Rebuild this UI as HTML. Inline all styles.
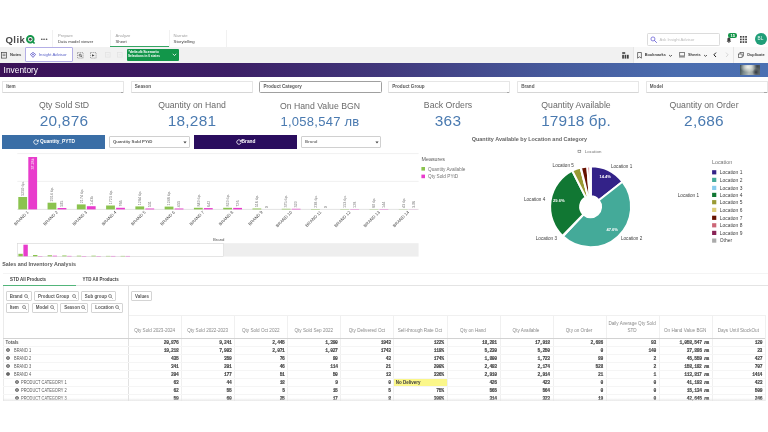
<!DOCTYPE html>
<html lang="en"><head><meta charset="utf-8"><title>Inventory - Qlik Sense</title>
<style>
html,body{margin:0;padding:0;background:#fff;}
body{width:768px;height:432px;overflow:hidden;position:relative;font-family:"Liberation Sans",sans-serif;color:#404040;}
.a{position:absolute;white-space:nowrap;line-height:1;}
.t{position:absolute;white-space:nowrap;line-height:1;transform-origin:0 50%;}
.vsep{position:absolute;width:1px;background:#f1f1f1;}
.hsep{position:absolute;height:1px;background:#e6e6e6;}
.fbox{position:absolute;top:80.6px;height:12.6px;border:0.6px solid #e6e6e6;border-bottom-color:#d6d6d6;border-radius:1px;background:#fff;box-sizing:border-box;}
.fbox span{position:absolute;left:3.2px;top:3.5px;font-size:4.6px;font-weight:bold;color:#595959;line-height:1;}
.kt{position:absolute;width:128px;text-align:center;font-size:8.7px;color:#6a6a6a;line-height:1;white-space:nowrap;}
.kv{position:absolute;width:128px;text-align:center;font-size:15.4px;color:#4a7ab0;line-height:1;white-space:nowrap;letter-spacing:0.25px;}
.chip{position:absolute;height:9.6px;border:0.8px solid #d4d4d4;border-radius:1px;box-sizing:border-box;background:#fff;font-size:4.45px;font-weight:bold;color:#595959;line-height:1;white-space:nowrap;}
.chip span{position:absolute;left:3.2px;top:2.3px;}
.th{position:absolute;width:53px;text-align:center;font-size:4.62px;color:#8a8a8a;line-height:1.5;white-space:nowrap;}
.td{position:absolute;width:50.3px;text-align:right;font-size:4.7px;font-weight:bold;color:#454545;line-height:1;white-space:nowrap;font-family:"Liberation Mono","Liberation Sans",monospace;letter-spacing:-0.35px;-webkit-text-stroke:0.14px #454545;}
.rl{position:absolute;font-size:4.6px;transform:scaleX(0.86);transform-origin:0 50%;color:#595959;line-height:1;white-space:nowrap;}
.lg{position:absolute;font-size:5px;color:#595959;line-height:1;white-space:nowrap;}
</style></head><body>
<div id="app" style="position:absolute;left:0;top:0;width:768px;height:432px;overflow:hidden;will-change:transform;">

<!-- top navigation -->
<div class="a" style="left:5.4px;top:34.9px;font-size:9.6px;font-weight:bold;color:#4a4a4a;letter-spacing:0.45px;">Qlik</div>
<svg class="a" style="left:25px;top:33.6px;" width="12" height="12" viewBox="0 0 12 12">
 <circle cx="5.3" cy="5.3" r="3.3" fill="#fff" stroke="#14964a" stroke-width="1.9"/>
 <circle cx="5.3" cy="5.3" r="1.35" fill="#4a4a4a"/>
 <path d="M7.9 7.9 L9.6 9.5" stroke="#14964a" stroke-width="1.7" stroke-linecap="butt"/>
</svg>
<div class="a" style="left:40.8px;top:35.9px;font-size:6px;font-weight:bold;color:#595959;letter-spacing:0.2px;">&#8226;&#8226;&#8226;</div>
<div class="vsep" style="left:52px;top:30px;height:17px;"></div>
<div class="a" style="left:58px;top:34.4px;font-size:4.2px;color:#a0a0a0;">Prepare</div>
<div class="a" style="left:58px;top:40.2px;font-size:4.25px;color:#404040;">Data model viewer</div>
<div class="vsep" style="left:110px;top:30px;height:17px;"></div>
<div class="a" style="left:115.5px;top:34.4px;font-size:4.2px;color:#a0a0a0;">Analyze</div>
<div class="a" style="left:115.5px;top:40.2px;font-size:4.25px;color:#404040;">Sheet</div>
<div class="a" style="left:110px;top:46.3px;width:59px;height:1px;background:#35a663;"></div>
<div class="vsep" style="left:168.6px;top:30px;height:17px;"></div>
<div class="a" style="left:173.6px;top:34.4px;font-size:4.2px;color:#a0a0a0;">Narrate</div>
<div class="a" style="left:173.6px;top:40.2px;font-size:4.25px;color:#404040;">Storytelling</div>
<div class="vsep" style="left:226.4px;top:30px;height:17px;"></div>

<!-- search -->
<div class="a" style="left:647.4px;top:33.3px;width:72.6px;height:12.3px;border:0.6px solid #dcdcdc;border-radius:1.2px;box-sizing:border-box;background:#fff;"></div>
<svg class="a" style="left:649.6px;top:36px;" width="7.4" height="7.4" viewBox="0 0 7 7"><circle cx="2.8" cy="2.8" r="1.9" fill="none" stroke="#6a62d6" stroke-width="0.75"/><path d="M4.2 4.2 L6.2 6.2" stroke="#6a62d6" stroke-width="0.85" stroke-linecap="round"/></svg>
<div class="a" style="left:659.4px;top:37.6px;font-size:4.15px;color:#bcbcbc;">Ask Insight Advisor</div>
<!-- bell -->
<svg class="a" style="left:725.8px;top:36.6px;" width="5.8" height="6.5" viewBox="0 0 8 9"><path d="M4 0.8 C2.4 0.8 1.9 2.2 1.9 3.4 L1.9 5.2 L0.9 6.5 L7.1 6.5 L6.1 5.2 L6.1 3.4 C6.1 2.2 5.6 0.8 4 0.8 Z" fill="#404040"/><circle cx="4" cy="7.4" r="0.9" fill="#404040"/></svg>
<div class="a" style="left:728.4px;top:32.9px;width:8.8px;height:4.9px;border-radius:2.2px;background:#14964a;"></div>
<div class="a" style="left:730.4px;top:33.7px;font-size:4.1px;font-weight:bold;color:#fff;">15</div>
<svg class="a" style="left:739.6px;top:35.8px;" width="7" height="7" viewBox="0 0 7 7" fill="#404040"><rect x="0" y="0" width="1.7" height="1.7"/><rect x="2.6" y="0" width="1.7" height="1.7"/><rect x="5.2" y="0" width="1.7" height="1.7"/><rect x="0" y="2.6" width="1.7" height="1.7"/><rect x="2.6" y="2.6" width="1.7" height="1.7"/><rect x="5.2" y="2.6" width="1.7" height="1.7"/><rect x="0" y="5.2" width="1.7" height="1.7"/><rect x="2.6" y="5.2" width="1.7" height="1.7"/><rect x="5.2" y="5.2" width="1.7" height="1.7"/></svg>
<div class="a" style="left:754.6px;top:33.4px;width:12px;height:12px;border-radius:6px;background:#1f9e78;"></div>
<div class="a" style="left:757.6px;top:37.1px;font-size:4.7px;color:#e8f5f0;">BL</div>

<!-- toolbar -->
<div class="a" style="left:0;top:47px;width:768px;height:15.6px;background:#f1f1f1;"></div>
<div class="a" style="left:633px;top:47px;width:135px;height:15.6px;background:#f8f8f8;"></div>
<svg class="a" style="left:1.1px;top:51.8px;" width="6" height="7" viewBox="0 0 6 7"><rect x="0.5" y="0.5" width="5" height="5.6" fill="none" stroke="#404040" stroke-width="0.7"/><path d="M1.5 2.2 H4.5 M1.5 3.6 H4.5" stroke="#404040" stroke-width="0.6"/></svg>
<div class="a" style="left:10px;top:53.2px;font-size:4.1px;font-weight:bold;color:#404040;">Notes</div>
<div class="a" style="left:25.4px;top:47px;width:47.2px;height:15.4px;background:#fff;border:0.7px solid #b3aee6;box-sizing:border-box;border-radius:1px;"></div>
<svg class="a" style="left:29.6px;top:51.6px;" width="6" height="6" viewBox="0 0 6 6"><path d="M3 0.4 L5.6 2.4 L3 5.4 L0.4 2.4 Z" fill="none" stroke="#5a55c8" stroke-width="0.8"/><circle cx="3" cy="2.6" r="0.8" fill="#5a55c8"/></svg>
<div class="a" style="left:38.8px;top:52.8px;font-size:4.3px;color:#5a62c8;">Insight Advisor</div>
<svg class="a" style="left:77px;top:51.6px;" width="7" height="7" viewBox="0 0 7 7"><rect x="0.5" y="0.5" width="5.6" height="5.6" fill="none" stroke="#6e6e6e" stroke-width="0.6" stroke-dasharray="1.2 0.9"/><circle cx="3.2" cy="3.2" r="1.1" fill="none" stroke="#404040" stroke-width="0.7"/><path d="M4 4 L5.2 5.2" stroke="#404040" stroke-width="0.7"/></svg>
<svg class="a" style="left:89.6px;top:51.6px;" width="7" height="7" viewBox="0 0 7 7"><rect x="0.5" y="0.5" width="5.6" height="5.6" fill="none" stroke="#6e6e6e" stroke-width="0.6" stroke-dasharray="1.2 0.9"/><path d="M2 2.2 L4.6 3.4 L2 4.6 Z" fill="#404040"/></svg>
<svg class="a" style="left:104.6px;top:52px;" width="6" height="6" viewBox="0 0 6 6"><rect x="0.5" y="0.5" width="4.6" height="4.6" fill="none" stroke="#e2e2e2" stroke-width="0.7"/><path d="M1.6 2.8 H4" stroke="#e2e2e2" stroke-width="0.7"/></svg>
<svg class="a" style="left:117.4px;top:52px;" width="6" height="6" viewBox="0 0 6 6"><rect x="0.5" y="0.5" width="4.6" height="4.6" fill="none" stroke="#e2e2e2" stroke-width="0.7"/><path d="M1.6 2.8 H4" stroke="#e2e2e2" stroke-width="0.7"/></svg>
<div class="a" style="left:126.8px;top:49px;width:52.4px;height:11.8px;background:#12964a;border-radius:1px;"></div>
<div class="a" style="left:128.4px;top:50.6px;font-size:3.7px;font-weight:bold;color:#fff;">*default:Scenario</div>
<div class="a" style="left:128.4px;top:55px;font-size:3.7px;font-weight:bold;color:#fff;transform:scaleX(0.85);transform-origin:0 50%;">Selections in 0 states</div>
<svg class="a" style="left:172px;top:53.4px;" width="5" height="4" viewBox="0 0 5 4"><path d="M0.8 0.8 L2.5 2.6 L4.2 0.8" fill="none" stroke="#fff" stroke-width="0.8"/></svg>

<svg class="a" style="left:621.8px;top:51.6px;" width="7" height="7" viewBox="0 0 7 7" fill="#404040"><rect x="0.2" y="0.2" width="3" height="1.6"/><rect x="0.2" y="2.8" width="1.7" height="3.8"/><rect x="2.6" y="2.8" width="1.7" height="3.8"/><rect x="5" y="2.8" width="1.7" height="3.8"/></svg>
<div class="vsep" style="left:633px;top:47px;height:15.6px;background:#e6e6e6;"></div>
<svg class="a" style="left:636.6px;top:51.6px;" width="5" height="7" viewBox="0 0 5 7"><path d="M0.6 0.5 H4.4 V6.2 L2.5 4.8 L0.6 6.2 Z" fill="none" stroke="#404040" stroke-width="0.7"/></svg>
<div class="a" style="left:644.7px;top:53.3px;font-size:3.9px;font-weight:bold;color:#404040;">Bookmarks</div>
<svg class="a" style="left:668.1px;top:54px;" width="5" height="4" viewBox="0 0 5 4"><path d="M1.1 1 L2.5 2.4 L3.9 1" fill="none" stroke="#404040" stroke-width="0.9"/></svg>
<svg class="a" style="left:679px;top:52px;" width="6.4" height="5.5" viewBox="0 0 7 6"><rect x="0.8" y="0.5" width="5.4" height="3.8" fill="none" stroke="#404040" stroke-width="0.7"/><path d="M0 5.4 H7" stroke="#404040" stroke-width="0.8"/></svg>
<div class="a" style="left:688px;top:53.3px;font-size:3.9px;font-weight:bold;color:#404040;">Sheets</div>
<svg class="a" style="left:703.2px;top:54px;" width="5" height="4" viewBox="0 0 5 4"><path d="M1.1 1 L2.5 2.4 L3.9 1" fill="none" stroke="#404040" stroke-width="0.9"/></svg>
<svg class="a" style="left:712.6px;top:52.4px;" width="4" height="6" viewBox="0 0 4 6"><path d="M3 0.6 L0.9 2.8 L3 5" fill="none" stroke="#202020" stroke-width="1"/></svg>
<svg class="a" style="left:724.6px;top:52.4px;" width="4" height="6" viewBox="0 0 4 6"><path d="M1 0.6 L3.1 2.8 L1 5" fill="none" stroke="#d4d4d4" stroke-width="0.9"/></svg>
<div class="vsep" style="left:733.4px;top:47px;height:15.6px;background:#e6e6e6;"></div>
<svg class="a" style="left:738px;top:51.9px;" width="6.4" height="6.4" viewBox="0 0 7 7"><rect x="2.2" y="0.5" width="4" height="4" fill="none" stroke="#404040" stroke-width="0.7"/><rect x="0.5" y="2.2" width="4" height="4" fill="#f8f8f8" stroke="#404040" stroke-width="0.7"/></svg>
<div class="a" style="left:747.2px;top:53.3px;font-size:3.9px;font-weight:bold;color:#404040;">Duplicate</div>

<!-- sheet header -->
<div class="a" style="left:0;top:62.6px;width:768px;height:14.6px;background:linear-gradient(90deg,#3a1157 0%,#3c1f66 30%,#41387c 50%,#465a9c 72%,#4a6cae 88%,#4b70b2 100%);"></div>
<div class="a" style="left:3.6px;top:65.6px;font-size:8.4px;color:#fff;">Inventory</div>
<div class="a" style="left:740px;top:64.8px;width:20px;height:10.6px;background:radial-gradient(ellipse at 40% 20%,#f2f3ec 0%,rgba(242,243,236,0) 48%),radial-gradient(circle at 80% 72%,#2e343a 0%,rgba(46,52,58,0) 22%),radial-gradient(circle at 88% 12%,#3a4248 0%,rgba(58,66,72,0) 30%),linear-gradient(100deg,#36464b 0%,#7a898b 22%,#b4bcb7 48%,#9aa3a2 68%,#596469 100%);"></div>

<!-- filter panes -->
<div class="fbox" style="left:2px;width:122.4px;"><span>Item</span></div>
<div class="a" style="left:120.80000000000001px;top:92.2px;width:2.6px;height:1px;background:#a6a6a6;"></div>
<div class="fbox" style="left:130.6px;width:122.4px;"><span>Season</span></div>
<div class="fbox" style="left:259.2px;width:122.4px;border:0.8px solid #a0a0a0;border-radius:1.5px;"><span>Product Category</span></div>
<div class="fbox" style="left:388px;width:122.4px;"><span>Product Group</span></div>
<div class="a" style="left:506.79999999999995px;top:92.2px;width:2.6px;height:1px;background:#a6a6a6;"></div>
<div class="fbox" style="left:517px;width:122.4px;"><span>Brand</span></div>
<div class="fbox" style="left:645.6px;width:122.4px;"><span>Model</span></div>
<div class="a" style="left:764.4px;top:92.2px;width:2.6px;height:1px;background:#a6a6a6;"></div>

<!-- KPIs -->
<div class="kt" style="left:0px;top:100.6px;">Qty Sold StD</div><div class="kv" style="left:0px;top:113.4px;">20,876</div>
<div class="kt" style="left:128px;top:100.6px;">Quantity on Hand</div><div class="kv" style="left:128px;top:113.4px;">18,281</div>
<div class="kt" style="left:256px;top:102.0px;">On Hand Value BGN</div><div class="kv" style="left:256px;top:113.4px;font-size:13px;top:114.7px;">1,058,547 лв</div>
<div class="kt" style="left:384px;top:100.6px;">Back Orders</div><div class="kv" style="left:384px;top:113.4px;">363</div>
<div class="kt" style="left:512px;top:100.6px;">Quantity Available</div><div class="kv" style="left:512px;top:113.4px;letter-spacing:0.1px;">17918 бр.</div>
<div class="kt" style="left:640px;top:100.6px;">Quantity on Order</div><div class="kv" style="left:640px;top:113.4px;">2,686</div>

<!-- variable buttons -->
<div class="a" style="left:2px;top:134.8px;width:103px;height:14.2px;background:#3a6ea6;"></div>
<svg class="a" style="left:33px;top:139.2px;" width="6" height="6" viewBox="0 0 6 6"><path d="M4.9 2 A2.2 2.2 0 1 0 5.1 3.6" fill="none" stroke="#fff" stroke-width="0.85"/><path d="M5.4 0.8 V2.4 H3.8" fill="none" stroke="#fff" stroke-width="0.8"/></svg>
<div class="a" style="left:40px;top:140px;font-size:4.8px;font-weight:bold;color:#fff;">Quantity_PYTD</div>
<div class="a" style="left:109.2px;top:136.2px;width:81.2px;height:11.4px;border:0.6px solid #d0d0d0;box-sizing:border-box;background:#fff;border-radius:1px;"></div>
<div class="a" style="left:113px;top:139.8px;font-size:4.3px;font-weight:bold;color:#595959;">Quantity Sold PYtD</div>
<svg class="a" style="left:183.2px;top:140.6px;" width="4" height="3" viewBox="0 0 4 3"><path d="M0.4 0.4 H3.6 L2 2.6 Z" fill="#404040"/></svg>
<div class="a" style="left:194.2px;top:134.8px;width:103px;height:14.2px;background:#2a0d5e;"></div>
<svg class="a" style="left:236px;top:139.2px;" width="6" height="6" viewBox="0 0 6 6"><path d="M4.9 2 A2.2 2.2 0 1 0 5.1 3.6" fill="none" stroke="#fff" stroke-width="0.85"/><path d="M5.4 0.8 V2.4 H3.8" fill="none" stroke="#fff" stroke-width="0.8"/></svg>
<div class="a" style="left:241.6px;top:140px;font-size:4.8px;font-weight:bold;color:#fff;">Brand</div>
<div class="a" style="left:301.2px;top:136.2px;width:80px;height:11.4px;border:0.6px solid #d0d0d0;box-sizing:border-box;background:#fff;border-radius:1px;"></div>
<div class="a" style="left:305px;top:139.8px;font-size:4.3px;font-weight:bold;color:#7a7a7a;">Brand</div>
<svg class="a" style="left:374.8px;top:140.6px;" width="4" height="3" viewBox="0 0 4 3"><path d="M0.4 0.4 H3.6 L2 2.6 Z" fill="#404040"/></svg>

<!-- bar chart -->
<svg class="a" style="left:0;top:150px;" width="470" height="112" viewBox="0 150 470 112" font-family="Liberation Sans, sans-serif">
<line x1="17.3" y1="153.6" x2="418.6" y2="153.6" stroke="#e6e6e6" stroke-width="0.6"/>
<line x1="17.3" y1="181.4" x2="418.6" y2="181.4" stroke="#e6e6e6" stroke-width="0.6"/>
<line x1="17.3" y1="209.4" x2="418.6" y2="209.4" stroke="#cfcfcf" stroke-width="0.6"/>
<rect x="18.30" y="197.00" width="8.8" height="12.40" fill="#8bc34f"/>
<rect x="28.30" y="157.00" width="8.8" height="52.40" fill="#e83ccc"/>
<text transform="translate(24.00,195.80) rotate(-90)" font-size="3.7" fill="#737373">5250 бр.</text>
<text transform="translate(34.00,169.60) rotate(-90)" font-size="3.7" fill="#ffffff">37.28k</text>
<text transform="translate(28.90,212.60) rotate(-45)" text-anchor="end" font-size="4.3" fill="#4d4d4d">BRAND 1</text>
<rect x="47.57" y="202.70" width="8.8" height="6.70" fill="#8bc34f"/>
<rect x="57.57" y="208.00" width="8.8" height="1.40" fill="#e83ccc"/>
<text transform="translate(53.27,201.50) rotate(-90)" font-size="3.7" fill="#737373">2914 бр.</text>
<text transform="translate(63.27,206.80) rotate(-90)" font-size="3.7" fill="#737373">595</text>
<text transform="translate(58.17,212.60) rotate(-45)" text-anchor="end" font-size="4.3" fill="#4d4d4d">BRAND 2</text>
<rect x="76.84" y="204.40" width="8.8" height="5.00" fill="#8bc34f"/>
<rect x="86.84" y="206.20" width="8.8" height="3.20" fill="#e83ccc"/>
<text transform="translate(82.54,203.20) rotate(-90)" font-size="3.7" fill="#737373">2174 бр.</text>
<text transform="translate(92.54,205.00) rotate(-90)" font-size="3.7" fill="#737373">1.43k</text>
<text transform="translate(87.44,212.60) rotate(-45)" text-anchor="end" font-size="4.3" fill="#4d4d4d">BRAND 3</text>
<rect x="106.11" y="205.50" width="8.8" height="3.90" fill="#8bc34f"/>
<rect x="116.11" y="207.80" width="8.8" height="1.60" fill="#e83ccc"/>
<text transform="translate(111.81,204.30) rotate(-90)" font-size="3.7" fill="#737373">1723 бр.</text>
<text transform="translate(121.81,206.60) rotate(-90)" font-size="3.7" fill="#737373">766</text>
<text transform="translate(116.71,212.60) rotate(-45)" text-anchor="end" font-size="4.3" fill="#4d4d4d">BRAND 4</text>
<rect x="135.38" y="206.40" width="8.8" height="3.00" fill="#8bc34f"/>
<rect x="145.38" y="208.50" width="8.8" height="0.90" fill="#e83ccc"/>
<text transform="translate(141.08,205.20) rotate(-90)" font-size="3.7" fill="#737373">1284 бр.</text>
<text transform="translate(151.08,207.30) rotate(-90)" font-size="3.7" fill="#737373">531</text>
<text transform="translate(145.98,212.60) rotate(-45)" text-anchor="end" font-size="4.3" fill="#4d4d4d">BRAND 5</text>
<rect x="164.65" y="206.60" width="8.8" height="2.80" fill="#8bc34f"/>
<rect x="174.65" y="208.50" width="8.8" height="0.90" fill="#e83ccc"/>
<text transform="translate(170.35,205.40) rotate(-90)" font-size="3.7" fill="#737373">1248 бр.</text>
<text transform="translate(180.35,207.30) rotate(-90)" font-size="3.7" fill="#737373">433</text>
<text transform="translate(175.25,212.60) rotate(-45)" text-anchor="end" font-size="4.3" fill="#4d4d4d">BRAND 6</text>
<rect x="193.92" y="207.80" width="8.8" height="1.60" fill="#8bc34f"/>
<rect x="203.92" y="208.10" width="8.8" height="1.30" fill="#e83ccc"/>
<text transform="translate(199.62,206.60) rotate(-90)" font-size="3.7" fill="#737373">849 бр.</text>
<text transform="translate(209.62,206.90) rotate(-90)" font-size="3.7" fill="#737373">642</text>
<text transform="translate(204.52,212.60) rotate(-45)" text-anchor="end" font-size="4.3" fill="#4d4d4d">BRAND 7</text>
<rect x="223.19" y="207.80" width="8.8" height="1.60" fill="#8bc34f"/>
<rect x="233.19" y="207.90" width="8.8" height="1.50" fill="#e83ccc"/>
<text transform="translate(228.89,206.60) rotate(-90)" font-size="3.7" fill="#737373">819 бр.</text>
<text transform="translate(238.89,206.70) rotate(-90)" font-size="3.7" fill="#737373">726</text>
<text transform="translate(233.79,212.60) rotate(-45)" text-anchor="end" font-size="4.3" fill="#4d4d4d">BRAND 8</text>
<rect x="252.46" y="208.50" width="8.8" height="0.90" fill="#8bc34f"/>
<text transform="translate(258.16,207.30) rotate(-90)" font-size="3.7" fill="#737373">516 бр.</text>
<text transform="translate(268.16,208.20) rotate(-90)" font-size="3.7" fill="#737373">0</text>
<text transform="translate(263.06,212.60) rotate(-45)" text-anchor="end" font-size="4.3" fill="#4d4d4d">BRAND 9</text>
<rect x="281.73" y="208.80" width="8.8" height="0.60" fill="#8bc34f"/>
<rect x="291.73" y="208.80" width="8.8" height="0.60" fill="#e83ccc"/>
<text transform="translate(287.43,207.60) rotate(-90)" font-size="3.7" fill="#737373">375 бр.</text>
<text transform="translate(297.43,207.60) rotate(-90)" font-size="3.7" fill="#737373">329</text>
<text transform="translate(292.33,212.60) rotate(-45)" text-anchor="end" font-size="4.3" fill="#4d4d4d">BRAND 10</text>
<rect x="311.00" y="209.00" width="8.8" height="0.40" fill="#8bc34f"/>
<text transform="translate(316.70,207.80) rotate(-90)" font-size="3.7" fill="#737373">238 бр.</text>
<text transform="translate(326.70,208.20) rotate(-90)" font-size="3.7" fill="#737373">0</text>
<text transform="translate(321.60,212.60) rotate(-45)" text-anchor="end" font-size="4.3" fill="#4d4d4d">BRAND 11</text>
<rect x="340.27" y="209.10" width="8.8" height="0.30" fill="#8bc34f"/>
<rect x="350.27" y="209.10" width="8.8" height="0.30" fill="#e83ccc"/>
<text transform="translate(345.97,207.90) rotate(-90)" font-size="3.7" fill="#737373">153 бр.</text>
<text transform="translate(355.97,207.90) rotate(-90)" font-size="3.7" fill="#737373">128</text>
<text transform="translate(350.87,212.60) rotate(-45)" text-anchor="end" font-size="4.3" fill="#4d4d4d">BRAND 12</text>
<rect x="369.54" y="209.15" width="8.8" height="0.25" fill="#8bc34f"/>
<rect x="379.54" y="209.10" width="8.8" height="0.30" fill="#e83ccc"/>
<text transform="translate(375.24,207.95) rotate(-90)" font-size="3.7" fill="#737373">89 бр.</text>
<text transform="translate(385.24,207.90) rotate(-90)" font-size="3.7" fill="#737373">144</text>
<text transform="translate(380.14,212.60) rotate(-45)" text-anchor="end" font-size="4.3" fill="#4d4d4d">BRAND 13</text>
<rect x="398.81" y="209.20" width="8.8" height="0.20" fill="#8bc34f"/>
<rect x="408.81" y="209.30" width="8.8" height="0.10" fill="#e83ccc"/>
<text transform="translate(404.51,208.00) rotate(-90)" font-size="3.7" fill="#737373">43 бр.</text>
<text transform="translate(414.51,208.10) rotate(-90)" font-size="3.7" fill="#737373">3.96</text>
<text transform="translate(409.41,212.60) rotate(-45)" text-anchor="end" font-size="4.3" fill="#4d4d4d">BRAND 14</text>
<text x="213" y="240.6" font-size="4.3" fill="#595959">Brand</text>
<rect x="17.3" y="243.2" width="401.3" height="13.4" fill="#eeeeee"/>
<rect x="17.6" y="243.5" width="205.9" height="12.8" fill="#ffffff" stroke="#d4d4d4" stroke-width="0.5"/>
<rect x="18.40" y="253.80" width="4.4" height="2.50" fill="#8bc34f"/>
<rect x="23.40" y="244.70" width="4.4" height="11.60" fill="#e83ccc"/>
<rect x="33.00" y="255.00" width="4.4" height="1.30" fill="#8bc34f"/>
<rect x="38.00" y="256.00" width="4.4" height="0.30" fill="#e83ccc"/>
<rect x="47.60" y="255.30" width="4.4" height="1.00" fill="#8bc34f"/>
<rect x="52.60" y="255.70" width="4.4" height="0.60" fill="#e83ccc"/>
<rect x="62.20" y="255.50" width="4.4" height="0.80" fill="#8bc34f"/>
<rect x="67.20" y="255.90" width="4.4" height="0.40" fill="#e83ccc"/>
<rect x="76.80" y="255.70" width="4.4" height="0.60" fill="#8bc34f"/>
<rect x="81.80" y="256.00" width="4.4" height="0.30" fill="#e83ccc"/>
<rect x="91.40" y="255.70" width="4.4" height="0.60" fill="#8bc34f"/>
<rect x="96.40" y="256.00" width="4.4" height="0.30" fill="#e83ccc"/>
<rect x="106.00" y="255.90" width="4.4" height="0.40" fill="#8bc34f"/>
<rect x="111.00" y="255.95" width="4.4" height="0.35" fill="#e83ccc"/>
<rect x="120.60" y="255.90" width="4.4" height="0.40" fill="#8bc34f"/>
<rect x="125.60" y="255.95" width="4.4" height="0.35" fill="#e83ccc"/>
<text x="421.6" y="160.8" font-size="5.3" fill="#595959">Measures</text>
<rect x="421.4" y="167" width="3.6" height="3.6" fill="#8bc34f"/>
<text x="428" y="170.6" font-size="4.7" fill="#737373">Quantity Available</text>
<rect x="421.4" y="174.6" width="3.6" height="3.6" fill="#e83ccc"/>
<text x="428" y="178.2" font-size="4.7" fill="#737373">Qty Sold PYtD</text>
</svg>

<!-- pie chart -->
<svg class="a" style="left:460px;top:130px;" width="308" height="126" viewBox="460 130 308 126" font-family="Liberation Sans, sans-serif">
<text x="471.8" y="140.8" font-size="5.45" font-weight="bold" fill="#666666">Quantity Available by Location and Category</text>
<rect x="578" y="150.2" width="2.8" height="2.2" fill="none" stroke="#595959" stroke-width="0.5"/>
<text x="584.8" y="153" font-size="4.4" fill="#737373">Location</text>
<path d="M590.60 166.30 A40.5 40.5 0 0 1 622.43 181.75 L598.85 200.31 A10.5 10.5 0 0 0 590.60 196.30 Z" fill="#332288" stroke="#ffffff" stroke-width="2" stroke-linejoin="round"/>
<path d="M622.43 181.75 A40.5 40.5 0 0 1 562.88 236.32 L583.41 214.45 A10.5 10.5 0 0 0 598.85 200.31 Z" fill="#44aa99" stroke="#ffffff" stroke-width="2" stroke-linejoin="round"/>
<path d="M562.88 236.32 A40.5 40.5 0 0 1 562.47 235.93 L583.31 214.35 A10.5 10.5 0 0 0 583.41 214.45 Z" fill="#88ccee" stroke="#ffffff" stroke-width="2" stroke-linejoin="round"/>
<path d="M562.47 235.93 A40.5 40.5 0 0 1 572.28 170.68 L585.85 197.44 A10.5 10.5 0 0 0 583.31 214.35 Z" fill="#117733" stroke="#ffffff" stroke-width="2" stroke-linejoin="round"/>
<path d="M572.28 170.68 A40.5 40.5 0 0 1 580.60 167.55 L588.01 196.63 A10.5 10.5 0 0 0 585.85 197.44 Z" fill="#999933" stroke="#ffffff" stroke-width="2" stroke-linejoin="round"/>
<path d="M580.60 167.55 A40.5 40.5 0 0 1 580.87 167.49 L588.08 196.61 A10.5 10.5 0 0 0 588.01 196.63 Z" fill="#ddcc77" stroke="#ffffff" stroke-width="2" stroke-linejoin="round"/>
<path d="M580.87 167.49 A40.5 40.5 0 0 1 587.28 166.44 L589.74 196.34 A10.5 10.5 0 0 0 588.08 196.61 Z" fill="#661100" stroke="#ffffff" stroke-width="2" stroke-linejoin="round"/>
<path d="M587.28 166.44 A40.5 40.5 0 0 1 590.46 166.30 L590.56 196.30 A10.5 10.5 0 0 0 589.74 196.34 Z" fill="#cc6677" stroke="#ffffff" stroke-width="2" stroke-linejoin="round"/>
<path d="M590.46 166.30 A40.5 40.5 0 0 1 590.53 166.30 L590.58 196.30 A10.5 10.5 0 0 0 590.56 196.30 Z" fill="#882255" stroke="#ffffff" stroke-width="2" stroke-linejoin="round"/>
<path d="M590.53 166.30 A40.5 40.5 0 0 1 590.60 166.30 L590.60 196.30 A10.5 10.5 0 0 0 590.58 196.30 Z" fill="#aaaaaa" stroke="#ffffff" stroke-width="2" stroke-linejoin="round"/>
<text x="599.4" y="178.2" font-size="4.1" font-weight="bold" fill="#ffffff">14.4%</text>
<text x="606.4" y="231.2" font-size="4.1" font-weight="bold" fill="#ffffff">47.6%</text>
<text x="553" y="202.4" font-size="4.1" font-weight="bold" fill="#ffffff">29.6%</text>
<text x="611" y="167.8" font-size="4.6" fill="#404040">Location 1</text>
<text x="552.6" y="166.8" font-size="4.6" fill="#404040">Location 5</text>
<text x="524" y="201" font-size="4.6" fill="#404040">Location 4</text>
<text x="535.8" y="239.8" font-size="4.6" fill="#404040">Location 3</text>
<text x="621" y="239.8" font-size="4.6" fill="#404040">Location 2</text>
<text x="677.8" y="196.6" font-size="4.6" fill="#404040">Location 1</text>
<text x="712" y="163.6" font-size="5.35" fill="#737373">Location</text>
<rect x="712.1" y="170.2" width="4.2" height="4.2" fill="#332288"/>
<text x="719.8" y="174.0" font-size="4.9" fill="#404040">Location 1</text>
<rect x="712.1" y="177.8" width="4.2" height="4.2" fill="#44aa99"/>
<text x="719.8" y="181.6" font-size="4.9" fill="#404040">Location 2</text>
<rect x="712.1" y="185.8" width="4.2" height="4.2" fill="#88ccee"/>
<text x="719.8" y="189.6" font-size="4.9" fill="#404040">Location 3</text>
<rect x="712.1" y="192.8" width="4.2" height="4.2" fill="#117733"/>
<text x="719.8" y="196.6" font-size="4.9" fill="#404040">Location 4</text>
<rect x="712.1" y="200.1" width="4.2" height="4.2" fill="#999933"/>
<text x="719.8" y="203.9" font-size="4.9" fill="#404040">Location 5</text>
<rect x="712.1" y="207.8" width="4.2" height="4.2" fill="#ddcc77"/>
<text x="719.8" y="211.6" font-size="4.9" fill="#404040">Location 6</text>
<rect x="712.1" y="215.7" width="4.2" height="4.2" fill="#661100"/>
<text x="719.8" y="219.5" font-size="4.9" fill="#404040">Location 7</text>
<rect x="712.1" y="223.2" width="4.2" height="4.2" fill="#cc6677"/>
<text x="719.8" y="227.0" font-size="4.9" fill="#404040">Location 8</text>
<rect x="712.1" y="230.8" width="4.2" height="4.2" fill="#882255"/>
<text x="719.8" y="234.6" font-size="4.9" fill="#404040">Location 9</text>
<rect x="712.1" y="238.5" width="4.2" height="4.2" fill="#aaaaaa"/>
<text x="719.8" y="242.3" font-size="4.9" fill="#404040">Other</text>
</svg>

<!-- pivot table -->
<div class="a" style="left:2.2px;top:262.4px;font-size:5.35px;font-weight:bold;color:#595959;">Sales and Inventory Analysis</div>
<div class="a" style="left:10px;top:277.8px;font-size:4.45px;font-weight:bold;color:#404040;">STD All Products</div>
<div class="a" style="left:82.6px;top:277.8px;font-size:4.45px;font-weight:bold;color:#404040;">YTD All Products</div>
<div class="hsep" style="left:3px;top:285.4px;width:765px;background:#e4e4e4;"></div>
<div class="hsep" style="left:3px;top:272.6px;width:765px;background:#f4f4f4;"></div>
<div class="hsep" style="left:128px;top:314.6px;width:637px;background:#f0f0f0;"></div>
<div class="a" style="left:3px;top:284.9px;width:73px;height:1px;background:#52b57a;"></div>
<div class="vsep" style="left:3px;top:286px;height:114.6px;background:#ebebeb;"></div>
<div class="vsep" style="left:128px;top:286px;height:114.6px;background:#e2e2e2;"></div>
<div class="chip" style="left:5.5px;top:291.3px;width:26.2px;"><span>Brand</span></div><svg class="a" style="left:24.299999999999997px;top:293.5px;" width="5" height="5" viewBox="0 0 5 5"><circle cx="2" cy="2" r="1.5" fill="none" stroke="#595959" stroke-width="0.6"/><path d="M3.1 3.1 L4.6 4.6" stroke="#595959" stroke-width="0.6"/></svg>
<div class="chip" style="left:33.8px;top:291.3px;width:45.2px;"><span>Product Group</span></div><svg class="a" style="left:71.6px;top:293.5px;" width="5" height="5" viewBox="0 0 5 5"><circle cx="2" cy="2" r="1.5" fill="none" stroke="#595959" stroke-width="0.6"/><path d="M3.1 3.1 L4.6 4.6" stroke="#595959" stroke-width="0.6"/></svg>
<div class="chip" style="left:80.6px;top:291.3px;width:35.2px;"><span>Sub group</span></div><svg class="a" style="left:108.39999999999999px;top:293.5px;" width="5" height="5" viewBox="0 0 5 5"><circle cx="2" cy="2" r="1.5" fill="none" stroke="#595959" stroke-width="0.6"/><path d="M3.1 3.1 L4.6 4.6" stroke="#595959" stroke-width="0.6"/></svg>
<div class="chip" style="left:5.5px;top:303.1px;width:23.8px;"><span>Item</span></div><svg class="a" style="left:21.9px;top:305.3px;" width="5" height="5" viewBox="0 0 5 5"><circle cx="2" cy="2" r="1.5" fill="none" stroke="#595959" stroke-width="0.6"/><path d="M3.1 3.1 L4.6 4.6" stroke="#595959" stroke-width="0.6"/></svg>
<div class="chip" style="left:31.6px;top:303.1px;width:26.1px;"><span>Model</span></div><svg class="a" style="left:50.300000000000004px;top:305.3px;" width="5" height="5" viewBox="0 0 5 5"><circle cx="2" cy="2" r="1.5" fill="none" stroke="#595959" stroke-width="0.6"/><path d="M3.1 3.1 L4.6 4.6" stroke="#595959" stroke-width="0.6"/></svg>
<div class="chip" style="left:60px;top:303.1px;width:28.4px;"><span>Season</span></div><svg class="a" style="left:81.0px;top:305.3px;" width="5" height="5" viewBox="0 0 5 5"><circle cx="2" cy="2" r="1.5" fill="none" stroke="#595959" stroke-width="0.6"/><path d="M3.1 3.1 L4.6 4.6" stroke="#595959" stroke-width="0.6"/></svg>
<div class="chip" style="left:91px;top:303.1px;width:31.7px;"><span>Location</span></div><svg class="a" style="left:115.3px;top:305.3px;" width="5" height="5" viewBox="0 0 5 5"><circle cx="2" cy="2" r="1.5" fill="none" stroke="#595959" stroke-width="0.6"/><path d="M3.1 3.1 L4.6 4.6" stroke="#595959" stroke-width="0.6"/></svg>
<div class="chip" style="left:130.8px;top:291.3px;width:20.8px;"><span>Values</span></div>
<div class="th" style="left:128.2px;top:327.6px;">Qty Sold 2023-2024</div>
<div class="vsep" style="left:181.2px;top:315.4px;height:85.2px;background:#f0f0f0;"></div><div class="th" style="left:181.2px;top:327.6px;">Qty Sold 2022-2023</div>
<div class="vsep" style="left:234.3px;top:315.4px;height:85.2px;background:#f0f0f0;"></div><div class="th" style="left:234.3px;top:327.6px;">Qty Sold Oct 2022</div>
<div class="vsep" style="left:287.3px;top:315.4px;height:85.2px;background:#f0f0f0;"></div><div class="th" style="left:287.3px;top:327.6px;">Qty Sold Sep 2022</div>
<div class="vsep" style="left:340.4px;top:315.4px;height:85.2px;background:#f0f0f0;"></div><div class="th" style="left:340.4px;top:327.6px;">Qty Delivered Oct</div>
<div class="vsep" style="left:393.4px;top:315.4px;height:85.2px;background:#f0f0f0;"></div><div class="th" style="left:393.4px;top:327.6px;">Sell-through Rate Oct</div>
<div class="vsep" style="left:446.5px;top:315.4px;height:85.2px;background:#f0f0f0;"></div><div class="th" style="left:446.5px;top:327.6px;">Qty on Hand</div>
<div class="vsep" style="left:499.5px;top:315.4px;height:85.2px;background:#f0f0f0;"></div><div class="th" style="left:499.5px;top:327.6px;">Qty Available</div>
<div class="vsep" style="left:552.6px;top:315.4px;height:85.2px;background:#f0f0f0;"></div><div class="th" style="left:552.6px;top:327.6px;">Qty on Order</div>
<div class="vsep" style="left:605.6px;top:315.4px;height:85.2px;background:#f0f0f0;"></div><div class="th" style="left:605.6px;top:321.4px;">Daily Average Qty Sold<br>STD</div>
<div class="vsep" style="left:658.7px;top:315.4px;height:85.2px;background:#f0f0f0;"></div><div class="th" style="left:658.7px;top:327.6px;">On Hand Value BGN</div>
<div class="vsep" style="left:711.8px;top:315.4px;height:85.2px;background:#f0f0f0;"></div><div class="th" style="left:711.8px;top:327.6px;">Days Until StockOut</div>
<div class="vsep" style="left:764.8px;top:315.4px;height:85.2px;background:#f0f0f0;"></div>
<div class="hsep" style="left:3px;top:337.8px;width:762px;background:#d2d2d2;"></div>
<div class="rl" style="left:5.6px;top:340.8px;font-weight:bold;transform:none;font-size:4.5px;">Totals</div><div class="td" style="left:128.2px;top:340.8px;">20,876</div><div class="td" style="left:181.2px;top:340.8px;">9,241</div><div class="td" style="left:234.3px;top:340.8px;">2,445</div><div class="td" style="left:287.3px;top:340.8px;">1,390</div><div class="td" style="left:340.4px;top:340.8px;">1943</div><div class="td" style="left:393.4px;top:340.8px;">122%</div><div class="td" style="left:446.5px;top:340.8px;">18,281</div><div class="td" style="left:499.5px;top:340.8px;">17,918</div><div class="td" style="left:552.6px;top:340.8px;">2,686</div><div class="td" style="left:605.6px;top:340.8px;">93</div><div class="td" style="left:658.7px;top:340.8px;">1,058,547 лв</div><div class="td" style="left:711.8px;top:340.8px;">120</div>
<div class="hsep" style="left:3px;top:346.2px;width:762px;background:#f5f5f5;"></div><svg class="a" style="left:6.2px;top:347.9px;" width="4" height="4" viewBox="0 0 4 4"><circle cx="2" cy="2" r="1.8" fill="#333333"/><path d="M1.1 2 H2.9" stroke="#fff" stroke-width="0.6"/><path d="M2 1.1 V2.9" stroke="#fff" stroke-width="0.6"/></svg><div class="rl" style="left:14.4px;top:348.8px;">BRAND 1</div><div class="td" style="left:128.2px;top:348.8px;">19,218</div><div class="td" style="left:181.2px;top:348.8px;">7,903</div><div class="td" style="left:234.3px;top:348.8px;">2,071</div><div class="td" style="left:287.3px;top:348.8px;">1,027</div><div class="td" style="left:340.4px;top:348.8px;">1743</div><div class="td" style="left:393.4px;top:348.8px;">119%</div><div class="td" style="left:446.5px;top:348.8px;">5,230</div><div class="td" style="left:499.5px;top:348.8px;">5,250</div><div class="td" style="left:552.6px;top:348.8px;">0</div><div class="td" style="left:605.6px;top:348.8px;">140</div><div class="td" style="left:658.7px;top:348.8px;">37,886 лв</div><div class="td" style="left:711.8px;top:348.8px;">23</div>
<div class="hsep" style="left:3px;top:354.2px;width:762px;background:#f5f5f5;"></div><svg class="a" style="left:6.2px;top:355.9px;" width="4" height="4" viewBox="0 0 4 4"><circle cx="2" cy="2" r="1.8" fill="#333333"/><path d="M1.1 2 H2.9" stroke="#fff" stroke-width="0.6"/><path d="M2 1.1 V2.9" stroke="#fff" stroke-width="0.6"/></svg><div class="rl" style="left:14.4px;top:356.8px;">BRAND 2</div><div class="td" style="left:128.2px;top:356.8px;">435</div><div class="td" style="left:181.2px;top:356.8px;">359</div><div class="td" style="left:234.3px;top:356.8px;">76</div><div class="td" style="left:287.3px;top:356.8px;">80</div><div class="td" style="left:340.4px;top:356.8px;">43</div><div class="td" style="left:393.4px;top:356.8px;">174%</div><div class="td" style="left:446.5px;top:356.8px;">1,800</div><div class="td" style="left:499.5px;top:356.8px;">1,723</div><div class="td" style="left:552.6px;top:356.8px;">80</div><div class="td" style="left:605.6px;top:356.8px;">2</div><div class="td" style="left:658.7px;top:356.8px;">45,559 лв</div><div class="td" style="left:711.8px;top:356.8px;">427</div>
<div class="hsep" style="left:3px;top:362.2px;width:762px;background:#f5f5f5;"></div><svg class="a" style="left:6.2px;top:363.9px;" width="4" height="4" viewBox="0 0 4 4"><circle cx="2" cy="2" r="1.8" fill="#333333"/><path d="M1.1 2 H2.9" stroke="#fff" stroke-width="0.6"/><path d="M2 1.1 V2.9" stroke="#fff" stroke-width="0.6"/></svg><div class="rl" style="left:14.4px;top:364.8px;">BRAND 3</div><div class="td" style="left:128.2px;top:364.8px;">341</div><div class="td" style="left:181.2px;top:364.8px;">201</div><div class="td" style="left:234.3px;top:364.8px;">46</div><div class="td" style="left:287.3px;top:364.8px;">114</div><div class="td" style="left:340.4px;top:364.8px;">21</div><div class="td" style="left:393.4px;top:364.8px;">200%</div><div class="td" style="left:446.5px;top:364.8px;">2,493</div><div class="td" style="left:499.5px;top:364.8px;">2,174</div><div class="td" style="left:552.6px;top:364.8px;">528</div><div class="td" style="left:605.6px;top:364.8px;">2</div><div class="td" style="left:658.7px;top:364.8px;">158,182 лв</div><div class="td" style="left:711.8px;top:364.8px;">707</div>
<div class="hsep" style="left:3px;top:370.2px;width:762px;background:#f5f5f5;"></div><svg class="a" style="left:6.2px;top:371.9px;" width="4" height="4" viewBox="0 0 4 4"><circle cx="2" cy="2" r="1.8" fill="#333333"/><path d="M1.1 2 H2.9" stroke="#fff" stroke-width="0.6"/></svg><div class="rl" style="left:14.4px;top:372.8px;">BRAND 4</div><div class="td" style="left:128.2px;top:372.8px;">204</div><div class="td" style="left:181.2px;top:372.8px;">177</div><div class="td" style="left:234.3px;top:372.8px;">51</div><div class="td" style="left:287.3px;top:372.8px;">50</div><div class="td" style="left:340.4px;top:372.8px;">13</div><div class="td" style="left:393.4px;top:372.8px;">336%</div><div class="td" style="left:446.5px;top:372.8px;">2,910</div><div class="td" style="left:499.5px;top:372.8px;">2,914</div><div class="td" style="left:552.6px;top:372.8px;">21</div><div class="td" style="left:605.6px;top:372.8px;">1</div><div class="td" style="left:658.7px;top:372.8px;">113,817 лв</div><div class="td" style="left:711.8px;top:372.8px;">1414</div>
<div class="hsep" style="left:3px;top:378.2px;width:762px;background:#f5f5f5;"></div><svg class="a" style="left:15px;top:379.9px;" width="4" height="4" viewBox="0 0 4 4"><circle cx="2" cy="2" r="1.8" fill="#333333"/><path d="M1.1 2 H2.9" stroke="#fff" stroke-width="0.6"/><path d="M2 1.1 V2.9" stroke="#fff" stroke-width="0.6"/></svg><div class="rl" style="left:21px;top:380.8px;">PRODUCT CATEGORY 1</div><div class="td" style="left:128.2px;top:380.8px;">63</div><div class="td" style="left:181.2px;top:380.8px;">44</div><div class="td" style="left:234.3px;top:380.8px;">18</div><div class="td" style="left:287.3px;top:380.8px;">9</div><div class="td" style="left:340.4px;top:380.8px;">0</div><div class="a" style="left:394.1px;top:378.6px;width:52.6px;height:7.5px;background:#fbf78a;"></div><div class="rl" style="left:395.8px;top:380.6px;font-weight:bold;color:#404040;transform:none;font-size:4.5px;">No Delivery</div><div class="td" style="left:446.5px;top:380.8px;">426</div><div class="td" style="left:499.5px;top:380.8px;">423</div><div class="td" style="left:552.6px;top:380.8px;">0</div><div class="td" style="left:605.6px;top:380.8px;">0</div><div class="td" style="left:658.7px;top:380.8px;">41,193 лв</div><div class="td" style="left:711.8px;top:380.8px;">423</div>
<div class="hsep" style="left:3px;top:386.2px;width:762px;background:#f5f5f5;"></div><svg class="a" style="left:15px;top:387.9px;" width="4" height="4" viewBox="0 0 4 4"><circle cx="2" cy="2" r="1.8" fill="#333333"/><path d="M1.1 2 H2.9" stroke="#fff" stroke-width="0.6"/><path d="M2 1.1 V2.9" stroke="#fff" stroke-width="0.6"/></svg><div class="rl" style="left:21px;top:388.8px;">PRODUCT CATEGORY 2</div><div class="td" style="left:128.2px;top:388.8px;">62</div><div class="td" style="left:181.2px;top:388.8px;">55</div><div class="td" style="left:234.3px;top:388.8px;">5</div><div class="td" style="left:287.3px;top:388.8px;">15</div><div class="td" style="left:340.4px;top:388.8px;">5</div><div class="td" style="left:393.4px;top:388.8px;">75%</div><div class="td" style="left:446.5px;top:388.8px;">565</div><div class="td" style="left:499.5px;top:388.8px;">564</div><div class="td" style="left:552.6px;top:388.8px;">0</div><div class="td" style="left:605.6px;top:388.8px;">0</div><div class="td" style="left:658.7px;top:388.8px;">15,134 лв</div><div class="td" style="left:711.8px;top:388.8px;">509</div>
<div class="hsep" style="left:3px;top:394.2px;width:762px;background:#f5f5f5;"></div><svg class="a" style="left:15px;top:395.9px;" width="4" height="4" viewBox="0 0 4 4"><circle cx="2" cy="2" r="1.8" fill="#333333"/><path d="M1.1 2 H2.9" stroke="#fff" stroke-width="0.6"/><path d="M2 1.1 V2.9" stroke="#fff" stroke-width="0.6"/></svg><div class="rl" style="left:21px;top:396.8px;">PRODUCT CATEGORY 3</div><div class="td" style="left:128.2px;top:396.8px;">59</div><div class="td" style="left:181.2px;top:396.8px;">60</div><div class="td" style="left:234.3px;top:396.8px;">25</div><div class="td" style="left:287.3px;top:396.8px;">17</div><div class="td" style="left:340.4px;top:396.8px;">8</div><div class="td" style="left:393.4px;top:396.8px;">300%</div><div class="td" style="left:446.5px;top:396.8px;">314</div><div class="td" style="left:499.5px;top:396.8px;">323</div><div class="td" style="left:552.6px;top:396.8px;">19</div><div class="td" style="left:605.6px;top:396.8px;">0</div><div class="td" style="left:658.7px;top:396.8px;">42,645 лв</div><div class="td" style="left:711.8px;top:396.8px;">246</div>
<div class="a" style="left:3px;top:398.4px;width:762px;height:2.6px;background:linear-gradient(180deg,rgba(225,225,225,0) 0%,rgba(225,225,225,0.75) 100%);"></div>
<div class="a" style="left:0;top:401.4px;width:768px;height:31px;background:#fff;"></div>
</div>
</body></html>
